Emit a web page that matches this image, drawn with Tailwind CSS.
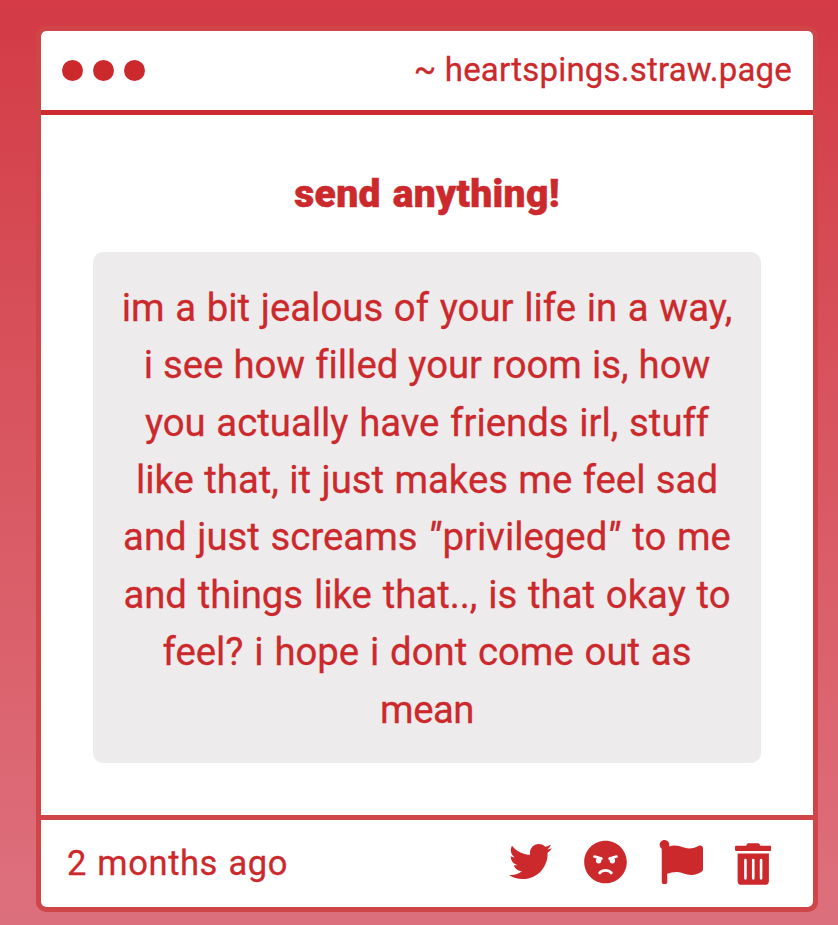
<!DOCTYPE html>
<html lang="en">
<head>
    <meta charset="UTF-8">
    <meta name="viewport" content="width=device-width, initial-scale=1.0">
    <title>heartspings.straw.page</title>
    <script src="https://cdn.jsdelivr.net/npm/@tailwindcss/browser@4"></script>
</head>
<body class="h-[925px] overflow-hidden bg-linear-to-b from-[#d33a45] to-[#dd707d] pt-[26px] pl-[36px] font-['Roboto',sans-serif] text-[#cc292c] [-webkit-text-stroke:0.3px] [font-variant-ligatures:none]">
    <!-- Card -->
    <div class="w-[782px] h-[886px] flex flex-col bg-white bg-clip-padding border-[5px] border-[#d04547] rounded-[10px]">
        <!-- Header -->
        <header class="h-[84px] shrink-0 flex items-center justify-between pl-[21px] pr-[21px] border-b-[5px] border-[#cc2b2f]">
            <div class="flex gap-[10px]">
                <span class="size-[21px] rounded-full bg-[#cc292c]"></span>
                <span class="size-[21px] rounded-full bg-[#cc292c]"></span>
                <span class="size-[21px] rounded-full bg-[#cc292c]"></span>
            </div>
            <span class="text-[33px] leading-none tracking-[0.2px] -mt-[2px]">~ heartspings.straw.page</span>
        </header>

        <!-- Message -->
        <main class="grow flex flex-col items-center">
            <h1 class="mt-[51px] text-[39px] leading-[57.4px] font-black tracking-[0.3px] [word-spacing:2px] [-webkit-text-stroke:0.5px]">send anything!</h1>
            <div class="mt-[29px] w-[668px] h-[511px] pt-[26.4px] rounded-[10px] bg-[#edebec] text-center text-[38.3px] leading-[57.4px] whitespace-nowrap">
                <p class="[word-spacing:1.2px]">im a bit jealous of your life in a way,</p>
                <p class="[word-spacing:0.5px]">i see how filled your room is, how</p>
                <p class="[word-spacing:1.2px]">you actually have friends irl, stuff</p>
                <p class="[word-spacing:0.9px]">like that, it just makes me feel sad</p>
                <p class="[word-spacing:1.2px]">and just screams <i class="font-medium tracking-[2.5px]">"</i>privileged<i class="font-medium tracking-[2.5px]">"</i> to me</p>
                <p class="[word-spacing:1.3px]">and things like that.., is that okay to</p>
                <p class="[word-spacing:1.3px]">feel? i hope i dont come out as</p>
                <p class="tracking-[-0.5px]">mean</p>
            </div>
        </main>

        <!-- Footer -->
        <footer class="h-[92px] shrink-0 flex items-center justify-between pl-[26px] pr-[42px] border-t-[5px] border-[#d04547]">
            <span class="text-[34.5px] leading-none tracking-[0.6px] [word-spacing:1.2px]">2 months ago</span>
            <div class="flex items-center gap-[32px] -mt-[4px]">
                <svg class="size-[43px]" viewBox="0 0 512 512" fill="currentColor">
                    <path d="M459.37 151.716c.325 4.548.325 9.097.325 13.645 0 138.72-105.583 298.558-298.558 298.558-59.452 0-114.68-17.219-161.137-47.106 8.447.974 16.568 1.299 25.34 1.299 49.055 0 94.213-16.568 130.274-44.832-46.132-.975-84.792-31.188-98.112-72.772 6.498.974 12.995 1.624 19.818 1.624 9.421 0 18.843-1.3 27.614-3.573-48.081-9.747-84.143-51.98-84.143-102.985v-1.299c13.969 7.797 30.214 12.67 47.431 13.319-28.264-18.843-46.781-51.005-46.781-87.391 0-19.492 5.197-37.36 14.294-52.954 51.655 63.675 129.3 105.258 216.365 109.807-1.624-7.797-2.599-15.918-2.599-24.04 0-57.828 46.782-104.934 104.934-104.934 30.213 0 57.502 12.67 76.67 33.137 23.715-4.548 46.456-13.32 66.599-25.34-7.798 24.366-24.366 44.833-46.132 57.827 21.117-2.273 41.584-8.122 60.426-16.243-14.292 20.791-32.161 39.308-52.628 54.253z" />
                </svg>
                <svg class="w-[43px] h-[44px]" viewBox="0 0 496 512" fill="currentColor">
                    <path d="M248 8C111 8 0 119 0 256s111 248 248 248 248-111 248-248S385 8 248 8zM136 240c0-9.3 4.1-17.5 10.5-23.4l-31-9.3c-8.5-2.5-13.3-11.5-10.7-19.9 2.5-8.5 11.4-13.2 19.9-10.7l80 24c8.5 2.5 13.3 11.5 10.7 19.9-2.1 6.9-8.4 11.4-15.3 11.4-.5 0-1.1-.2-1.7-.2.7 2.7 1.7 5.3 1.7 8.2 0 17.7-14.3 32-32 32S136 257.7 136 240zm168 154.2c-27.8-33.4-84.2-33.4-112.1 0-13.5 16.3-38.2-4.2-24.6-20.5 20-24 49.4-37.6 80.6-37.6s60.6 13.8 80.6 37.6c13.8 16.5-11.1 36.6-24.5 20.5zm76.6-186.9l-31 9.3c6.3 5.8 10.5 14.1 10.5 23.4 0 17.7-14.3 32-32 32s-32-14.3-32-32c0-2.9.9-5.6 1.7-8.2-.6.1-1.1.2-1.7.2-6.9 0-13.2-4.5-15.3-11.4-2.5-8.5 2.3-17.4 10.7-19.9l80-24c8.4-2.5 17.4 2.3 19.9 10.7 2.5 8.5-2.3 17.4-10.8 19.9z" />
                </svg>
                <svg class="size-[44px]" viewBox="0 0 512 512" fill="currentColor">
                    <path d="M349.565 98.783C295.978 98.783 251.721 64 184.348 64c-24.955 0-47.309 4.384-68.045 12.013a55.947 55.947 0 0 0 3.586-23.562C118.117 24.015 94.806 1.206 66.338.048 34.345-1.254 8 24.296 8 56c0 19.026 9.497 35.825 24 45.945V488c0 13.255 10.745 24 24 24h16c13.255 0 24-10.745 24-24v-94.4c28.311-12.064 63.582-22.122 114.435-22.122 53.588 0 97.844 34.783 165.217 34.783 48.169 0 86.667-16.294 122.505-40.858C506.84 359.452 512 349.571 512 339.045v-243.1c0-23.393-24.269-38.87-45.485-29.016-34.338 15.948-76.454 31.854-116.95 31.854z" />
                </svg>
                <svg class="w-[36.5px] h-[42px] mt-[5px]" viewBox="0 0 448 512" fill="currentColor">
                    <path d="M32 464a48 48 0 0 0 48 48h288a48 48 0 0 0 48-48V128H32zm272-256a16 16 0 0 1 32 0v224a16 16 0 0 1-32 0zm-96 0a16 16 0 0 1 32 0v224a16 16 0 0 1-32 0zm-96 0a16 16 0 0 1 32 0v224a16 16 0 0 1-32 0zM432 32H312l-9.4-18.7A24 24 0 0 0 281.1 0H166.8a23.72 23.72 0 0 0-21.4 13.3L136 32H16A16 16 0 0 0 0 48v32a16 16 0 0 0 16 16h416a16 16 0 0 0 16-16V48a16 16 0 0 0-16-16z" />
                </svg>
            </div>
        </footer>
    </div>
</body>
</html>
